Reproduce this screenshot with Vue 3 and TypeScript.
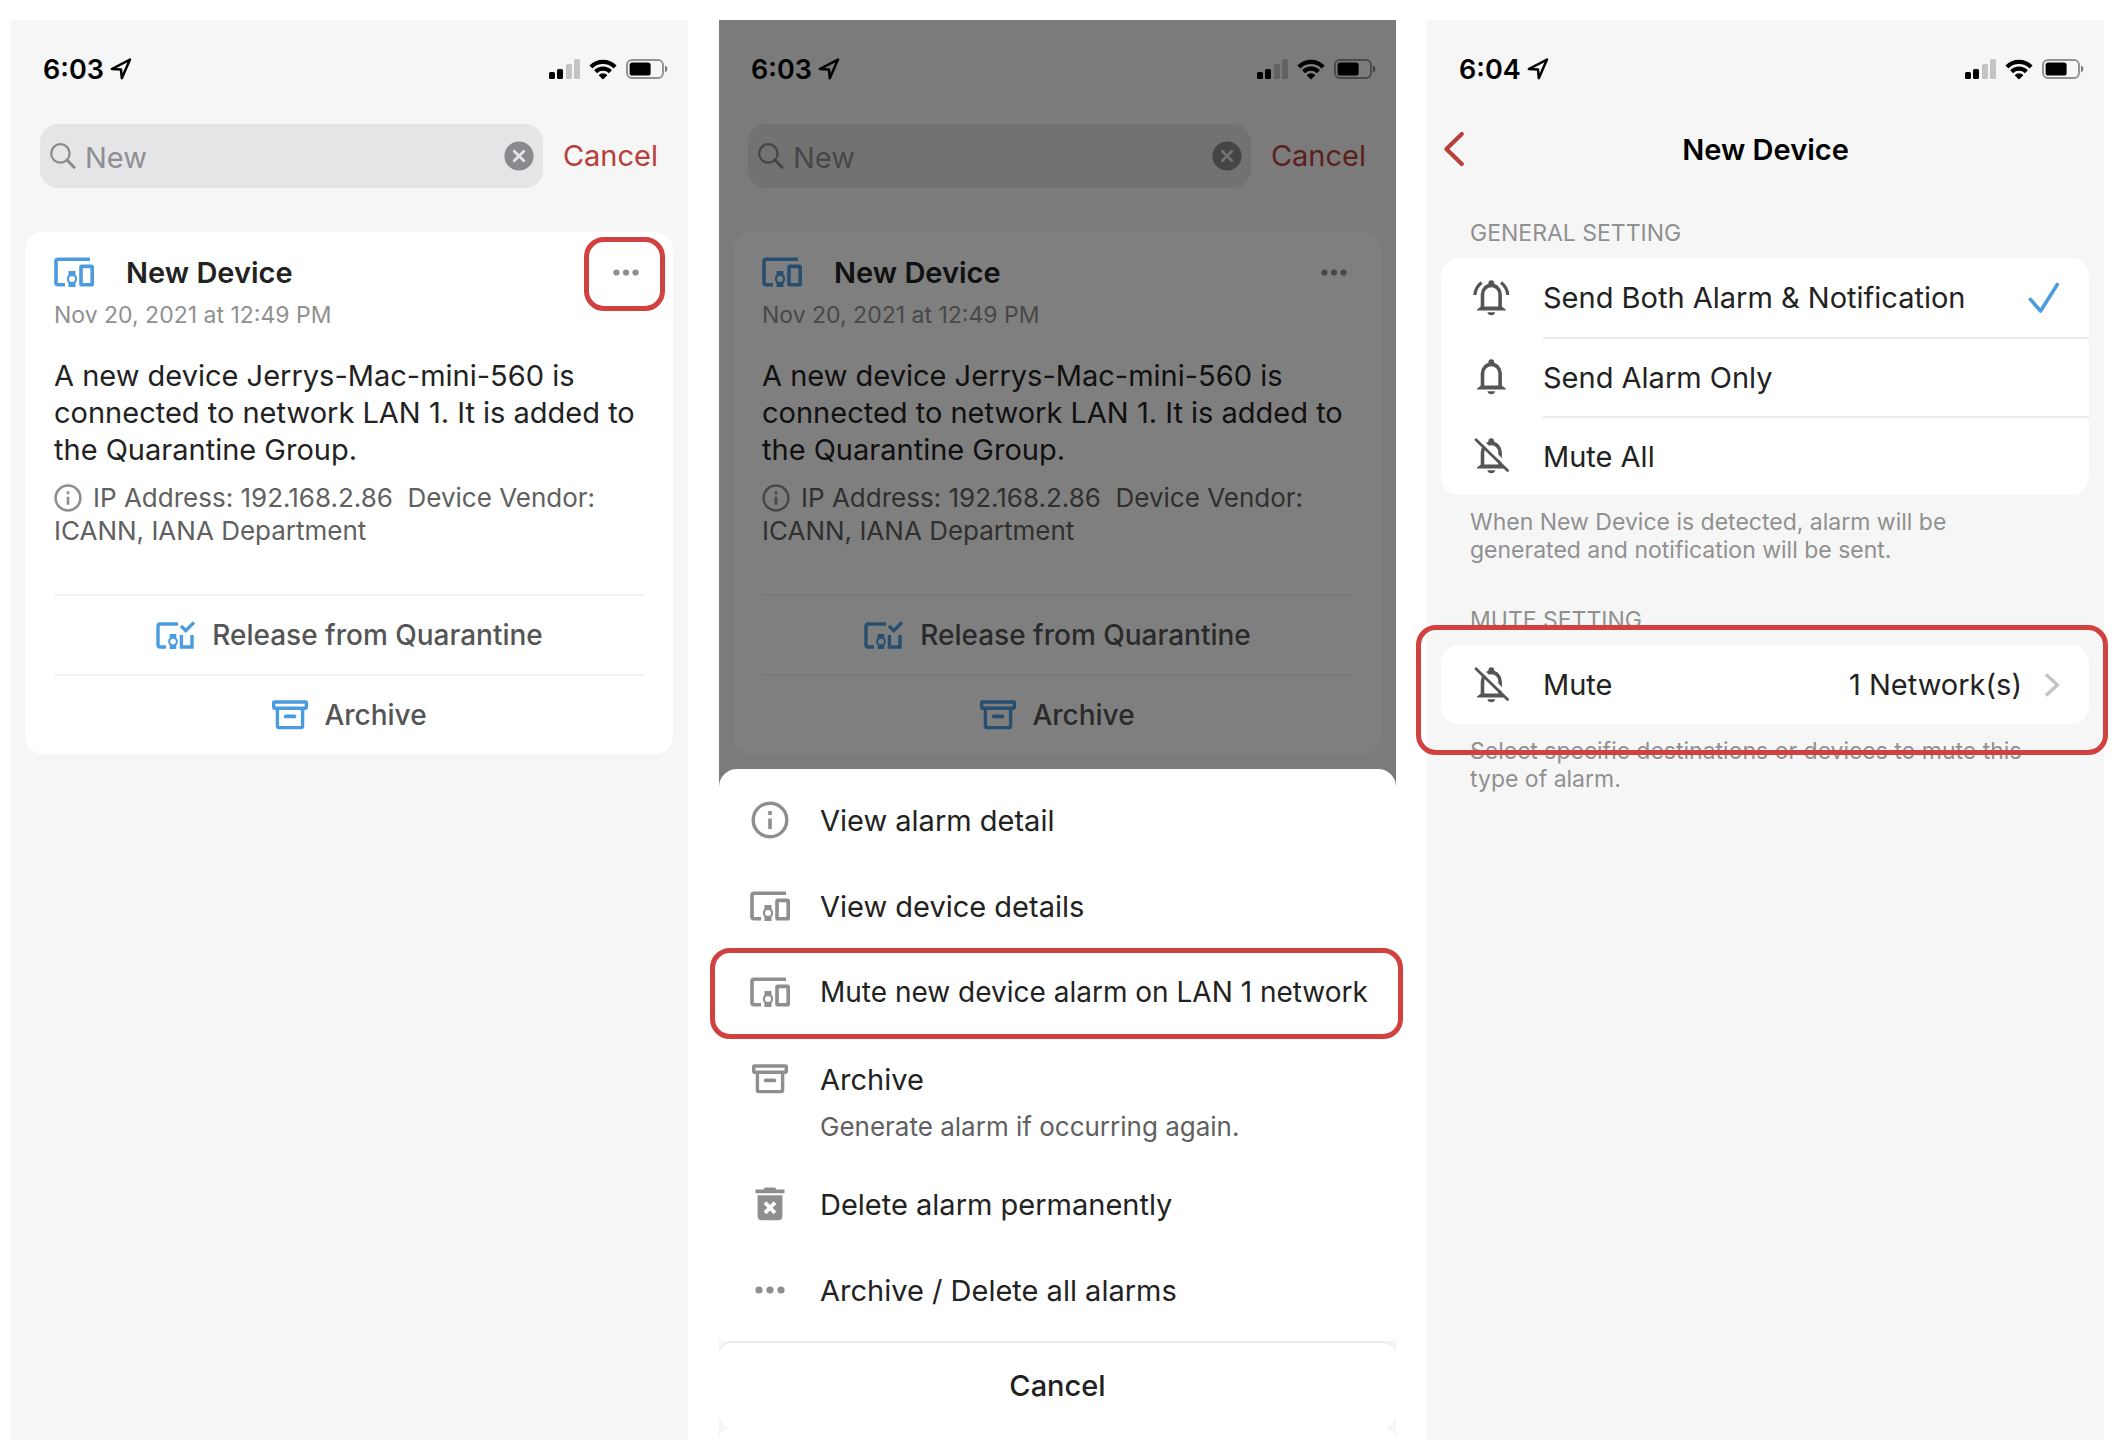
<script setup lang="ts">
import { ref } from 'vue'

interface Screen {
  id: string
  sheet: boolean
}

interface SheetAction {
  icon: string
  size: string
  label: string
  note?: string
  marked?: boolean
}

interface Mode {
  value: string
  icon: string
  label: string
}

const screens: Screen[] = [
  { id: 'list', sheet: false },
  { id: 'menu', sheet: true },
]

const actions: SheetAction[] = [
  { icon: 'info', size: 'i-info', label: 'View alarm detail' },
  { icon: 'devices', size: 'i-devices', label: 'View device details' },
  { icon: 'devices', size: 'i-devices', label: 'Mute new device alarm on LAN 1 network', marked: true },
  { icon: 'archive', size: 'i-archive', label: 'Archive', note: 'Generate alarm if occurring again.' },
  { icon: 'trash', size: 'i-trash', label: 'Delete alarm permanently' },
  { icon: 'dots', size: 'i-dots-lg', label: 'Archive / Delete all alarms' },
]

const modes: Mode[] = [
  { value: 'both', icon: 'bell-ring', label: 'Send Both Alarm & Notification' },
  { value: 'alarm', icon: 'bell', label: 'Send Alarm Only' },
  { value: 'mute', icon: 'bell-off', label: 'Mute All' },
]

const query = ref('New')
const mode = ref('both')
</script>

<template>
  <svg class="sprite" aria-hidden="true">
    <symbol id="location" viewBox="0 0 22 22">
      <path d="M1.8 11 20 1.6 11.8 20.2 11 11.6Z" fill="none" stroke="currentColor" stroke-width="2.5" stroke-linejoin="round" />
    </symbol>
    <symbol id="signal" viewBox="0 0 31 20">
      <rect x="0" y="13" width="6" height="7" rx="1.6" fill="currentColor" />
      <rect x="8" y="10" width="6" height="10" rx="1.6" fill="currentColor" />
      <rect x="17" y="5" width="6" height="15" rx="1.6" fill="currentColor" opacity=".2" />
      <rect x="25" y="0" width="6" height="20" rx="1.6" fill="currentColor" opacity=".2" />
    </symbol>
    <symbol id="wifi" viewBox="0 0 28 21">
      <path d="M1.9 7.9A17 17 0 0 1 26.1 7.9M6.6 12.7A10.6 10.6 0 0 1 21.4 12.7" fill="none" stroke="currentColor" stroke-width="4.2" />
      <path d="M14 20.6 9.6 16.2A6.2 6.2 0 0 1 18.4 16.2Z" fill="currentColor" />
    </symbol>
    <symbol id="battery" viewBox="0 0 42 20">
      <rect x="1" y="1" width="36" height="18" rx="5" fill="none" stroke="currentColor" stroke-width="2" opacity=".4" />
      <rect x="3.6" y="3.4" width="21" height="13.2" rx="2.6" fill="currentColor" />
      <path d="M39 6.6Q41.4 7.6 41.4 10T39 13.4Z" fill="currentColor" opacity=".5" />
    </symbol>
    <symbol id="search" viewBox="0 0 26 26">
      <circle cx="10.4" cy="10.4" r="9.2" fill="none" stroke="currentColor" stroke-width="2.2" />
      <path d="M17 17 24 24.2" stroke="currentColor" stroke-width="3" stroke-linecap="round" />
    </symbol>
    <symbol id="clear" viewBox="0 0 30 30">
      <circle cx="15" cy="15" r="14.6" fill="currentColor" />
      <path d="M10.2 10.2 19.8 19.8M19.8 10.2 10.2 19.8" stroke="#e5e5e7" stroke-width="2.8" stroke-linecap="round" />
    </symbol>
    <symbol id="watch" viewBox="0 0 12 16">
      <path fill-rule="evenodd" fill="currentColor" d="M2.5 0H9.5V4A5.6 5.6 0 0 1 9.5 12V16H2.5V12A5.6 5.6 0 0 1 2.5 4ZM6 5A3 3 0 1 0 6 11A3 3 0 1 0 6 5Z" />
    </symbol>
    <symbol id="devices" viewBox="0 0 40 30">
      <path d="M36 2.2H4Q2 2.2 2 4.2V25.8Q2 27.8 4 27.8H11" fill="none" stroke="currentColor" stroke-width="3.6" />
      <use href="#watch" x="12" y="14" width="12" height="16" />
      <rect x="27" y="9.4" width="11.2" height="18.4" rx=".8" fill="none" stroke="currentColor" stroke-width="3.6" />
    </symbol>
    <symbol id="release" viewBox="0 0 40 28">
      <path d="M22 3H4Q2 3 2 5V24Q2 26 4 26H10" fill="none" stroke="currentColor" stroke-width="3.4" />
      <use href="#watch" x="11" y="13" width="12" height="15" />
      <path d="M25.4 14V26H36V14" fill="none" stroke="currentColor" stroke-width="3.4" />
      <path d="M25 5 29.8 9.6 38 1.4" fill="none" stroke="currentColor" stroke-width="3.4" />
    </symbol>
    <symbol id="archive" viewBox="0 0 36 30">
      <rect x="1.7" y="2" width="32.6" height="6.2" rx=".6" fill="none" stroke="currentColor" stroke-width="3.4" />
      <path d="M5.4 9V26Q5.4 27.6 7 27.6H29Q30.6 27.6 30.6 26V9" fill="none" stroke="currentColor" stroke-width="3.4" />
      <path d="M13.6 16.4H22.4" stroke="currentColor" stroke-width="3.8" stroke-linecap="round" />
    </symbol>
    <symbol id="info" viewBox="0 0 38 38">
      <circle cx="19" cy="19" r="16.8" fill="none" stroke="currentColor" stroke-width="3.4" />
      <path d="M19 17.4V28M19 10V14" stroke="currentColor" stroke-width="3.6" />
    </symbol>
    <symbol id="trash" viewBox="0 0 30 34">
      <path d="M.5 2.6H8.4Q9 .6 11 .6H19Q21 .6 21.6 2.6H29.5V6.2H.5Z" fill="currentColor" />
      <path d="M2.6 8.2H27.4V29Q27.4 33.2 23.2 33.2H6.8Q2.6 33.2 2.6 29Z" fill="currentColor" />
      <path d="M10 15.6 20 25.8M20 15.6 10 25.8" stroke="#fff" stroke-width="3.8" />
    </symbol>
    <symbol id="dots" viewBox="0 0 30 8">
      <g fill="currentColor"><circle cx="4" cy="4" r="3.6" /><circle cx="15" cy="4" r="3.6" /><circle cx="26" cy="4" r="3.6" /></g>
    </symbol>
    <symbol id="bell" viewBox="0 0 37 36">
      <circle cx="18.3" cy="3.2" r="2.9" fill="currentColor" />
      <path d="M9.5 28V14.6A8.8 9.2 0 0 1 27.1 14.6V28" fill="none" stroke="currentColor" stroke-width="3.6" />
      <path d="M4 30.6V29.4L8 26.4H28.6L32.8 29.4V30.6Z" fill="currentColor" />
      <path d="M14.4 32.2H22.2Q21.6 35.2 18.3 35.2T14.4 32.2Z" fill="currentColor" />
    </symbol>
    <symbol id="bell-ring" viewBox="0 0 37 36">
      <use href="#bell" width="37" height="36" />
      <path d="M1.9 15Q2.2 7.4 8.6 2.4M34.7 15Q34.4 7.4 28 2.4" fill="none" stroke="currentColor" stroke-width="3.2" />
    </symbol>
    <symbol id="bell-off" viewBox="0 0 37 36">
      <use href="#bell" width="37" height="36" />
      <path d="M6.4 1 37.6 30.8" stroke="#fff" stroke-width="3.6" />
      <path d="M3 1.8 34.6 32.4" stroke="currentColor" stroke-width="2.8" stroke-linecap="round" />
    </symbol>
    <symbol id="check" viewBox="0 0 32 32">
      <path d="M2.4 17.4 12.6 29 29.4 2.4" fill="none" stroke="currentColor" stroke-width="3.6" stroke-linecap="round" stroke-linejoin="round" />
    </symbol>
    <symbol id="back" viewBox="0 0 22 36">
      <path d="M18.8 3 3.4 18 18.8 33" fill="none" stroke="currentColor" stroke-width="4.2" stroke-linecap="round" stroke-linejoin="round" />
    </symbol>
    <symbol id="next" viewBox="0 0 16 24">
      <path d="M2 1.4 13.4 12 2 22.6" fill="none" stroke="currentColor" stroke-width="3.4" />
    </symbol>
  </svg>

  <main class="board">
    <section v-for="s in screens" :key="s.id" class="phone">
      <header class="status">
        <span class="clock">6:03</span>
        <svg class="i-location"><use href="#location" /></svg>
        <span class="radios">
          <svg class="i-signal"><use href="#signal" /></svg>
          <svg class="i-wifi"><use href="#wifi" /></svg>
          <svg class="i-battery"><use href="#battery" /></svg>
        </span>
      </header>

      <form class="search" @submit.prevent>
        <div class="field">
          <svg class="i-search"><use href="#search" /></svg>
          <input v-model="query" type="text" aria-label="Search alarms" />
          <button type="button" class="clear" aria-label="Clear" @click="query = ''">
            <svg class="i-clear"><use href="#clear" /></svg>
          </button>
        </div>
        <button type="button" class="cancel">Cancel</button>
      </form>

      <article class="card alarm">
        <div class="head">
          <svg class="i-devices blue"><use href="#devices" /></svg>
          <h2>New Device</h2>
          <button type="button" class="more" aria-label="More">
            <svg class="i-dots"><use href="#dots" /></svg>
            <span v-if="!s.sheet" class="mark mark-more"></span>
          </button>
        </div>
        <p class="date">Nov 20, 2021 at 12:49 PM</p>
        <p class="text">A new device Jerrys-Mac-mini-560 is connected to network LAN 1. It is added to the Quarantine Group.</p>
        <p class="meta"><svg class="i-meta"><use href="#info" /></svg>IP Address: 192.168.2.86&nbsp; Device Vendor: ICANN, IANA Department</p>
        <div class="actions">
          <button type="button"><svg class="i-release blue"><use href="#release" /></svg>Release from Quarantine</button>
          <button type="button"><svg class="i-archive blue"><use href="#archive" /></svg>Archive</button>
        </div>
      </article>

      <template v-if="s.sheet">
        <div class="scrim"></div>
        <div class="sheet">
          <div class="options">
            <button v-for="a in actions" :key="a.label" type="button" class="option">
              <span class="slot"><svg :class="a.size"><use :href="'#' + a.icon" /></svg></span>
              <span :class="{ tight: a.marked }">{{ a.label }}</span>
              <span v-if="a.note" class="note">{{ a.note }}</span>
              <span v-if="a.marked" class="mark mark-option"></span>
            </button>
          </div>
          <div class="foot">
            <div class="lip"></div>
            <button type="button" class="dismiss">Cancel</button>
            <div class="tail"></div>
          </div>
        </div>
      </template>
    </section>

    <section class="phone">
      <header class="status">
        <span class="clock">6:04</span>
        <svg class="i-location"><use href="#location" /></svg>
        <span class="radios">
          <svg class="i-signal"><use href="#signal" /></svg>
          <svg class="i-wifi"><use href="#wifi" /></svg>
          <svg class="i-battery"><use href="#battery" /></svg>
        </span>
      </header>

      <nav class="navbar">
        <button type="button" class="back" aria-label="Back"><svg class="i-back"><use href="#back" /></svg></button>
        <h1>New Device</h1>
      </nav>

      <h3 class="caption">GENERAL SETTING</h3>
      <div class="card list">
        <label v-for="m in modes" :key="m.value" class="row">
          <input v-model="mode" type="radio" name="mode" :value="m.value" />
          <svg class="i-bell"><use :href="'#' + m.icon" /></svg>
          <span class="cell">{{ m.label }}<svg v-if="mode === m.value" class="i-check blue"><use href="#check" /></svg></span>
        </label>
      </div>
      <p class="hint">When New Device is detected, alarm will be generated and notification will be sent.</p>

      <h3 class="caption second">MUTE SETTING</h3>
      <div class="card list">
        <button type="button" class="row">
          <svg class="i-bell"><use href="#bell-off" /></svg>
          <span class="cell">Mute<span class="value">1 Network(s)</span><svg class="i-next"><use href="#next" /></svg></span>
        </button>
        <span class="mark mark-mute"></span>
      </div>
      <p class="hint">Select specific destinations or devices to mute this type of alarm.</p>
    </section>
  </main>
</template>

<style>
body {
  background: #fff;
}
</style>

<style scoped>
.sprite {
  position: absolute;
  width: 0;
  height: 0;
}

.board {
  box-sizing: border-box;
  display: grid;
  grid-template-columns: repeat(3, 1fr);
  gap: 31px;
  min-height: 100vh;
  padding: 20px 12px 0 11px;
  font-family: Inter, "Liberation Sans", sans-serif;
  font-size: 29px;
  color: #222;
}

svg {
  display: block;
  flex: none;
}

button {
  margin: 0;
  padding: 0;
  border: 0;
  background: none;
  font: inherit;
  color: inherit;
  cursor: pointer;
}

h1,
h2,
h3,
p {
  margin: 0;
}

.phone {
  position: relative;
  display: flex;
  flex-direction: column;
  min-width: 0;
  background: #f6f6f6;
}

.blue {
  color: #4a9cdf;
}

.i-location { width: 22px; height: 22px; }
.i-signal { width: 31px; height: 20px; }
.i-wifi { width: 28px; height: 21px; }
.i-battery { width: 42px; height: 20px; }
.i-search { width: 26px; height: 26px; }
.i-clear { width: 30px; height: 30px; }
.i-devices { width: 40px; height: 30px; }
.i-release { width: 40px; height: 28px; }
.i-archive { width: 36px; height: 30px; }
.i-info { width: 38px; height: 38px; }
.i-trash { width: 30px; height: 34px; }
.i-dots { width: 26px; height: 7px; }
.i-dots-lg { width: 30px; height: 8px; }
.i-bell { width: 37px; height: 36px; color: #555; }
.i-check { width: 32px; height: 32px; }
.i-back { width: 22px; height: 36px; }
.i-next { width: 16px; height: 24px; color: #c4c4c7; }

.mark {
  position: absolute;
  z-index: 2;
  border: 5px solid #d0413f;
  border-radius: 20px;
  pointer-events: none;
}

.status {
  display: flex;
  align-items: center;
  height: 98px;
  padding: 0 20px 0 32px;
  color: #000;
}

.clock {
  margin-right: 6px;
  font-size: 27px;
  font-weight: 600;
}

.radios {
  display: flex;
  align-items: center;
  gap: 9px;
  margin-left: auto;
}

.search {
  display: flex;
  align-items: center;
  gap: 20px;
  margin: 6px 30px 44px 29px;
}

.field {
  display: flex;
  flex: 1;
  align-items: center;
  min-width: 0;
  height: 64px;
  padding: 0 9px 0 10px;
  border-radius: 18px;
  background: #e5e5e7;
}

.field input {
  flex: 1;
  min-width: 0;
  margin: 0;
  padding: 2px 0 0 9px;
  border: 0;
  outline: 0;
  background: none;
  font: inherit;
  color: #8f8f92;
}

.i-search,
.i-clear {
  color: #8a8a8e;
}

.cancel {
  padding-bottom: 2px;
  color: #b8403a;
}

.card {
  position: relative;
  margin: 0 15px 0 14px;
  border-radius: 18px;
  background: #fff;
}

.alarm {
  padding: 20px 28px 0 29px;
}

.head {
  display: flex;
  align-items: center;
  height: 40px;
}

.head h2 {
  margin-left: 32px;
  font-size: 29px;
  font-weight: 600;
}

.more {
  position: relative;
  margin: 0 6px 0 auto;
  padding: 8px 0;
  color: #8e8e8e;
}

.mark-more {
  inset: -24px -26px -27px -29px;
}

.date {
  margin-top: 7px;
  font-size: 23px;
  line-height: 32px;
  color: #909090;
}

.text {
  margin-top: 26px;
  line-height: 37px;
}

.meta {
  margin-top: 13px;
  font-size: 26px;
  line-height: 33px;
  color: #606060;
}

.i-meta {
  display: inline-block;
  width: 28px;
  height: 28px;
  margin-right: 11px;
  vertical-align: -5px;
  color: #8e8e8e;
}

.actions {
  margin-top: 47px;
}

.actions button {
  display: flex;
  align-items: center;
  justify-content: center;
  gap: 16px;
  width: 100%;
  height: 80px;
  border-top: 2px solid #f2f3f6;
  font-size: 28px;
  font-weight: 500;
  color: #555;
}

.scrim {
  position: absolute;
  inset: 0;
  background: rgba(0, 0, 0, 0.5);
}

.sheet {
  position: absolute;
  inset: auto 0 0;
}

.options {
  padding: 8px 0 3px;
  border-radius: 18px 18px 0 0;
  background: #fff;
}

.option {
  position: relative;
  display: grid;
  grid-template-columns: 101px 1fr;
  grid-auto-rows: 86px;
  align-items: center;
  width: 100%;
  text-align: left;
}

.tight {
  font-size: 28px;
  white-space: nowrap;
}

.slot {
  display: flex;
  justify-content: center;
  color: #8e8e8e;
}

.note {
  grid-column: 2;
  align-self: start;
  margin-top: -16px;
  font-size: 26px;
  line-height: 40px;
  color: #606060;
}

.option:has(.note) {
  grid-auto-rows: auto;
  grid-template-rows: 88px 38px;
}

.mark-option {
  inset: -1px -7px -4px -9px;
}

.foot {
  background: #f6f6f6;
}

.lip {
  height: 5px;
  border-radius: 0 0 12px 12px;
  background: #fff;
}

.dismiss {
  width: 100%;
  height: 87px;
  border-top: 2px solid #e8edf2;
  border-radius: 14px;
  background: #fff;
  font-weight: 500;
}

.tail {
  height: 12px;
  border-radius: 14px 14px 0 0;
  background: #fff;
}

.navbar {
  display: grid;
  grid-template-columns: 1fr auto 1fr;
  align-items: center;
  height: 62px;
  padding: 0 16px;
  color: #000;
}

.navbar h1 {
  font-size: 29px;
  font-weight: 600;
}

.back {
  justify-self: start;
  color: #b8403a;
}

.caption {
  margin: 37px 43px 9px;
  font-size: 23px;
  font-weight: 400;
  line-height: 32px;
  color: #909090;
}

.second {
  margin-top: 40px;
}

.row {
  display: flex;
  align-items: center;
  width: 100%;
  height: 79px;
  padding-left: 32px;
  box-sizing: border-box;
  text-align: left;
  cursor: pointer;
}

.row input {
  position: absolute;
  opacity: 0;
}

.cell {
  display: flex;
  flex: 1;
  align-items: center;
  align-self: stretch;
  margin-left: 33px;
  padding-right: 29px;
}

.row + .row .cell {
  border-top: 2px solid #e9e9f0;
}

.i-check {
  margin-left: auto;
}

.value {
  margin-left: auto;
  padding-right: 22px;
}

.mark-mute {
  inset: -20px -19px -31px -25px;
}

.hint {
  padding: 13px 56px 0 43px;
  font-size: 23px;
  line-height: 28px;
  color: #909090;
}
</style>
